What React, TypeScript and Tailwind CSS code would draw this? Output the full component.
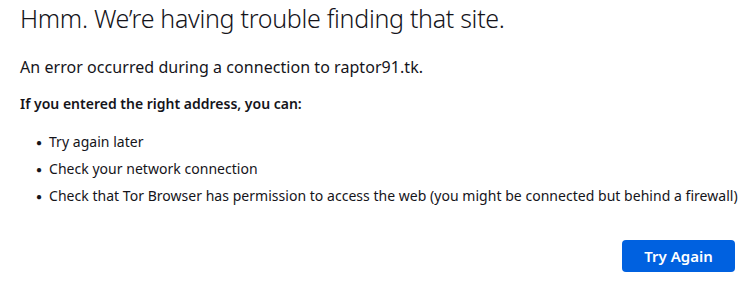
export default function App() {
  const items = [
    "Try again later",
    "Check your network connection",
    "Check that Tor Browser has permission to access the web (you might be connected but behind a firewall)",
  ];

  return (
    <div className="w-[752px] h-[287px] bg-white text-[#15141a] font-['Noto_Sans',sans-serif] overflow-hidden">
      <div className="pl-5 pt-[2px]">
        <h1 className="text-[25px] font-light leading-[32px] tracking-[-0.3px]">
          Hmm. We’re having trouble finding that site.
        </h1>
        <p className="mt-[22px] text-[16px] leading-[22px] tracking-[0.05px]">
          An error occurred during a connection to raptor91.tk.
        </p>
        <p className="mt-[16px] text-[14px] font-semibold leading-[20px]">
          If you entered the right address, you can:
        </p>
        <ul className="mt-[18px] flex flex-col gap-[7px] text-[14px] leading-[20px] tracking-[0.03px]">
          {items.map((item, i) => (
            <li key={i} className="flex items-center">
              <span className="w-[29px] pl-[16px] text-[10px]">●</span>
              {item}
            </li>
          ))}
        </ul>
        <div className="flex justify-end pr-[17px] mt-[34px]">
          <button className="w-[113px] h-[32px] rounded-[4px] bg-[#0061e0] text-white text-[15px] font-semibold">
            Try Again
          </button>
        </div>
      </div>
    </div>
  );
}
